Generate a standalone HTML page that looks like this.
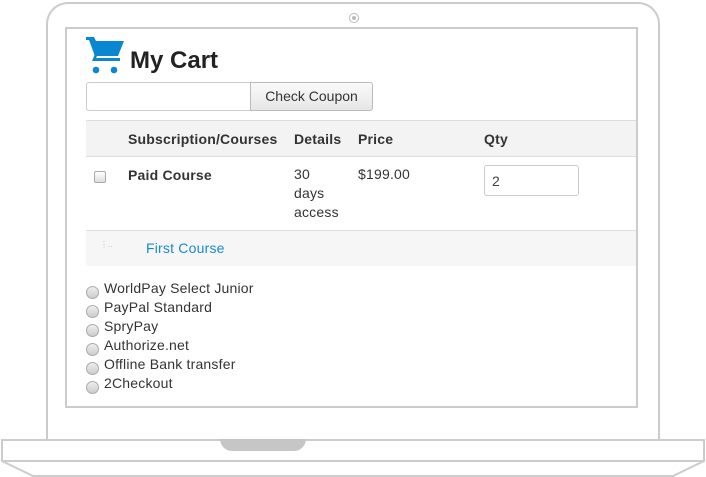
<!DOCTYPE html>
<html><head><meta charset="utf-8"><style>
*{margin:0;padding:0;box-sizing:border-box}
body{width:706px;height:477px;background:#fff;position:relative;overflow:hidden;font-family:"Liberation Sans",Arial,sans-serif;color:#333}
.a{position:absolute}
.t{font-size:14px;letter-spacing:0.2px;white-space:nowrap}
.r{width:13px;height:13px;border-radius:50%;border:1px solid #aaa;background:linear-gradient(#eee,#ccc)}
</style></head><body>
<div class="a" style="left:46px;top:2px;width:614px;height:442px;border:2px solid #ccc;border-bottom:none;border-radius:22px 22px 0 0"></div>
<div class="a" style="left:349px;top:13px;width:10px;height:10px;border:1px solid #bbb;border-radius:50%"></div>
<div class="a" style="left:352px;top:16px;width:4px;height:4px;background:#bbb;border-radius:50%"></div>
<div class="a" style="left:65px;top:27px;width:573px;height:381px;border:2px solid #ccc;overflow:hidden">
</div>
<div class="a" style="left:67px;top:29px;width:569px;height:377px;overflow:hidden">
 <svg class="a" style="left:18px;top:7px" width="40" height="38" viewBox="0 0 40 38"><path d="M1 1h8l2 4h28l-6 15H12l-1 2h24v3H7l2.5-6L4 4H1z" fill="#0a87d0"/><circle cx="11" cy="34" r="3.3" fill="#0a87d0"/><circle cx="29" cy="34" r="3.3" fill="#0a87d0"/></svg>
 <div class="a" style="left:63px;top:18px;font-size:24px;font-weight:bold;color:#222">My Cart</div>
 <div class="a" style="left:19px;top:53px;width:165px;height:29px;border:1px solid #ccc;border-radius:3px 0 0 3px"></div>
 <div class="a" style="left:183px;top:53px;width:123px;height:29px;border:1px solid #bbb;border-radius:0 3px 3px 0;background:linear-gradient(#fafafa,#e6e6e6);font-size:14px;line-height:27px;text-align:center;white-space:nowrap">Check Coupon</div>
 <div class="a" style="left:19px;top:91px;width:560px;height:37px;background:#f3f3f3;border-top:1px solid #ddd;border-bottom:1px solid #ddd"></div>
 <div class="a t" style="left:61px;top:102px;font-weight:bold">Subscription/Courses</div>
 <div class="a t" style="left:227px;top:102px;font-weight:bold">Details</div>
 <div class="a t" style="left:291px;top:102px;font-weight:bold">Price</div>
 <div class="a t" style="left:417px;top:102px;font-weight:bold">Qty</div>
 <div class="a" style="left:27px;top:142px;width:12px;height:12px;border:1px solid #aaa;border-radius:2px;background:linear-gradient(#fff,#ddd)"></div>
 <div class="a t" style="left:61px;top:138px;font-weight:bold">Paid Course</div>
 <div class="a t" style="left:227px;top:136px;line-height:19px">30<br>days<br>access</div>
 <div class="a t" style="left:291px;top:137px">$199.00</div>
 <div class="a" style="left:417px;top:136px;width:95px;height:31px;border:1px solid #ccc;border-radius:3px;font-size:14px;padding:7px 7px;color:#444">2</div>
 <div class="a" style="left:19px;top:201px;width:560px;height:36px;background:#f6f6f6;border-top:1px solid #ddd"></div>
 <div class="a" style="left:33px;top:211px;font-size:8px;color:#bbb">⋮..</div>
 <div class="a t" style="left:79px;top:211px;color:#1a8ad0">First Course</div>
 <div class="a r" style="left:19px;top:257px"></div><div class="a t" style="left:37px;top:251px">WorldPay Select Junior</div>
 <div class="a r" style="left:19px;top:276px"></div><div class="a t" style="left:37px;top:270px">PayPal Standard</div>
 <div class="a r" style="left:19px;top:295px"></div><div class="a t" style="left:37px;top:289px">SpryPay</div>
 <div class="a r" style="left:19px;top:314px"></div><div class="a t" style="left:37px;top:308px">Authorize.net</div>
 <div class="a r" style="left:19px;top:333px"></div><div class="a t" style="left:37px;top:327px">Offline Bank transfer</div>
 <div class="a r" style="left:19px;top:352px"></div><div class="a t" style="left:37px;top:346px">2Checkout</div>
</div>
<div class="a" style="left:1px;top:439px;width:704px;height:23px;border:2px solid #ccc;background:#fff"></div>
<div class="a" style="left:220px;top:439px;width:86px;height:12px;background:#c6c6c6;border-radius:0 0 14px 14px"></div>
<svg class="a" style="left:0;top:460px" width="706" height="17"><path d="M2 1L33 16H673L704 1" fill="none" stroke="#ccc" stroke-width="2"/></svg>
</body></html>
